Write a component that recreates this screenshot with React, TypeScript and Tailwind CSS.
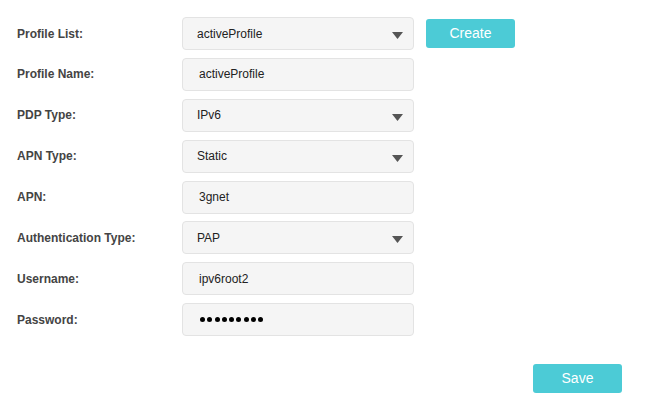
import React from "react";

type Field = {
  label: string;
  value: string;
  kind: "select" | "text" | "password";
};

const fields: Field[] = [
  { label: "Profile List:", value: "activeProfile", kind: "select" },
  { label: "Profile Name:", value: "activeProfile", kind: "text" },
  { label: "PDP Type:", value: "IPv6", kind: "select" },
  { label: "APN Type:", value: "Static", kind: "select" },
  { label: "APN:", value: "3gnet", kind: "text" },
  { label: "Authentication Type:", value: "PAP", kind: "select" },
  { label: "Username:", value: "ipv6root2", kind: "text" },
  { label: "Password:", value: "", kind: "password" },
];

function Arrow() {
  return (
    <svg width="11" height="7" viewBox="0 0 11 7" className="absolute right-[10px] top-[14px]">
      <path d="M0 0 L11 0 L5.5 7 Z" fill="#555" />
    </svg>
  );
}

function Box({ field }: { field: Field }) {
  return (
    <div className="relative flex h-[33px] w-[232px] items-center rounded-[4px] border border-[#e3e3e3] bg-[#f5f5f5] text-[12px] text-[#222]">
      {field.kind === "select" && (
        <>
          <span className="pl-[14px]">{field.value}</span>
          <Arrow />
        </>
      )}
      {field.kind === "text" && <span className="pl-[16px]">{field.value}</span>}
      {field.kind === "password" && (
        <span className="flex gap-[2.25px] pl-[17px]">
          {Array.from({ length: 9 }).map((_, i) => (
            <span key={i} className="h-[5px] w-[5px] rounded-full bg-black" />
          ))}
        </span>
      )}
    </div>
  );
}

export default function App() {
  return (
    <div className="h-[399px] w-[646px] bg-white font-['Liberation_Sans',Arial,sans-serif]">
      <div className="flex flex-col gap-[7.9px] pl-[17px] pt-[17px]">
        {fields.map((f, i) => (
          <div key={i} className="flex items-center">
            <label className="w-[165px] text-[12px] font-bold text-[#444]">{f.label}</label>
            <Box field={f} />
            {i === 0 && (
              <button className="ml-[12px] h-[29px] w-[89px] rounded-[3px] bg-[#4ccbd6] text-[14px] text-white">
                Create
              </button>
            )}
          </div>
        ))}
      </div>
      <div className="flex justify-end pr-[24px] pt-[28px]">
        <button className="h-[29px] w-[89px] rounded-[3px] bg-[#4ccbd6] text-[14px] text-white">
          Save
        </button>
      </div>
    </div>
  );
}
